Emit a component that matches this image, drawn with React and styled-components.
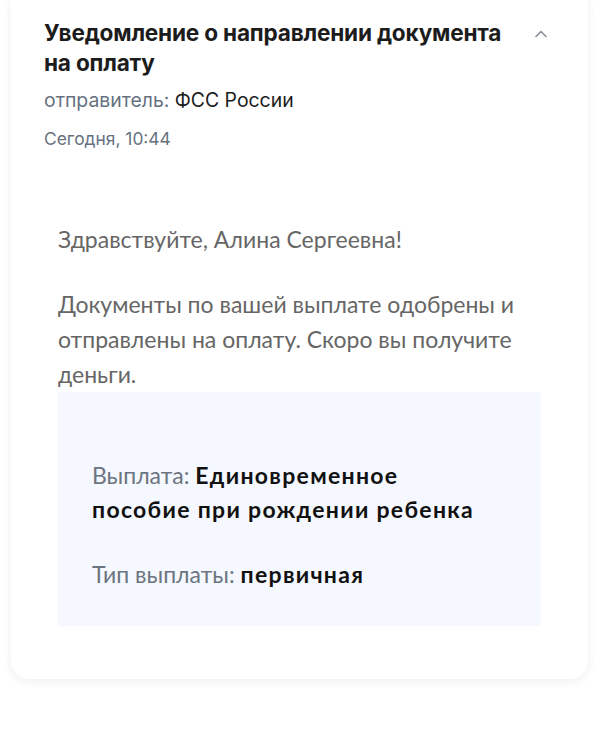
import React from 'react';
import styled, { createGlobalStyle } from 'styled-components';

const GlobalStyle = createGlobalStyle`
  html, body {
    margin: 0;
    padding: 0;
    background: #ffffff;
  }
  * {
    box-sizing: border-box;
  }
`;

const Page = styled.div`
  padding: 0 12px 0 11px;
  height: 733px;
`;

const Card = styled.div`
  background: #ffffff;
  border-radius: 0 0 18px 18px;
  box-shadow: 0 2px 10px rgba(20, 40, 80, 0.08);
  padding: 18px 33px 53px 33px;
`;

const Header = styled.div`
  display: flex;
  align-items: flex-start;
  justify-content: space-between;
  gap: 16px;
`;

const Title = styled.h2`
  margin: 0;
  max-width: 464px;
  font-family: Inter, Roboto, sans-serif;
  font-weight: 700;
  font-size: 22.6px;
  line-height: 30px;
  letter-spacing: -0.2px;
  color: #1c1c1c;
`;

const Toggle = styled.button`
  background: none;
  border: none;
  padding: 0;
  margin: 8px 6px 0 0;
  width: 16px;
  height: 16px;
  cursor: pointer;
  color: #8a8f97;
  display: flex;
  align-items: center;
  justify-content: center;
`;

const Sender = styled.div`
  margin-top: 9px;
  font-family: Inter, Roboto, sans-serif;
  font-size: 19.4px;
  line-height: 26px;
  color: #66727f;

  b {
    font-weight: 400;
    color: #1c1c1c;
  }
`;

const Date = styled.div`
  margin-top: 14px;
  font-family: Inter, Roboto, sans-serif;
  font-size: 17.4px;
  line-height: 24px;
  color: #66727f;
`;

const Body = styled.div`
  margin-top: 71px;
  padding: 0 14px;
  font-family: Lato, "Noto Sans", sans-serif;
  font-size: 23px;
  line-height: 35px;
  color: #666666;
`;

const Paragraph = styled.p`
  margin: ${p => p.$gap || 0}px 0 0 0;
`;

const InfoBox = styled.div`
  background: #f5f8fe;
  padding: 66px 34px 35px 34px;
  display: flex;
  flex-direction: column;
  gap: 31px;
`;

const InfoRow = styled.div`
  font-family: Lato, "Noto Sans", sans-serif;
  font-size: 23px;
  line-height: 34px;
  color: #6b7480;
  max-width: 396px;

  strong {
    font-size: 23px;
    font-weight: 700;
    color: #111111;
    letter-spacing: 1.3px;
  }
`;

const ChevronUp = () => (
  <svg width="16" height="16" viewBox="0 0 16 16" fill="none">
    <path d="M3 10.5L8 5.5L13 10.5" stroke="currentColor" strokeWidth="1.6" strokeLinecap="round" strokeLinejoin="round" />
  </svg>
);

const App = () => {
  return (
    <Page>
      <GlobalStyle />
      <Card>
        <Header>
          <Title>Уведомление о направлении документа на оплату</Title>
          <Toggle aria-label="Свернуть">
            <ChevronUp />
          </Toggle>
        </Header>
        <Sender>
          отправитель: <b>ФСС России</b>
        </Sender>
        <Date>Сегодня, 10:44</Date>

        <Body>
          <Paragraph>Здравствуйте, Алина Сергеевна!</Paragraph>
          <Paragraph $gap={30}>
            Документы по вашей выплате одобрены и отправлены на оплату. Скоро вы получите деньги.
          </Paragraph>
          <InfoBox>
            <InfoRow>
              Выплата: <strong>Единовременное пособие при рождении ребенка</strong>
            </InfoRow>
            <InfoRow>
              Тип выплаты: <strong>первичная</strong>
            </InfoRow>
          </InfoBox>
        </Body>
      </Card>
    </Page>
  );
};

export default App;
